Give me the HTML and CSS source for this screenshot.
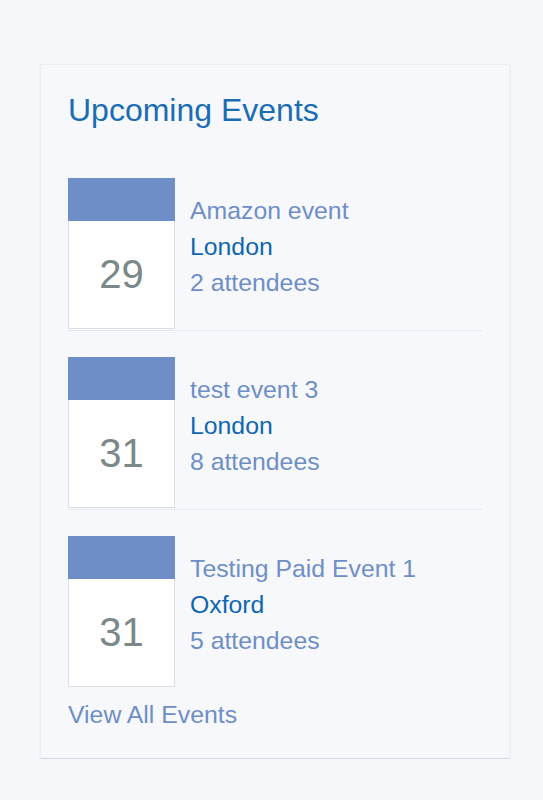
FILE: index.html
```html
<!DOCTYPE html>
<html lang="en">
<head>
<meta charset="utf-8">
<title>Upcoming Events</title>
<link rel="stylesheet" href="styles.css">
</head>
<body>
	<div class="panel">
		<h2 class="panelTitle">Upcoming Events</h2>
		<ul class="eventList">
			<li class="eventItem">
				<div class="cal"><div class="calTop"></div><div class="calDay">29</div></div>
				<div class="eventInfo">
					<a class="eventName" href="#">Amazon event</a>
					<span class="eventCity">London</span>
					<span class="eventCount">2 attendees</span>
				</div>
			</li>
			<li class="eventItem">
				<div class="cal"><div class="calTop"></div><div class="calDay">31</div></div>
				<div class="eventInfo">
					<a class="eventName" href="#">test event 3</a>
					<span class="eventCity">London</span>
					<span class="eventCount">8 attendees</span>
				</div>
			</li>
			<li class="eventItem">
				<div class="cal"><div class="calTop"></div><div class="calDay">31</div></div>
				<div class="eventInfo">
					<a class="eventName" href="#">Testing Paid Event 1</a>
					<span class="eventCity">Oxford</span>
					<span class="eventCount">5 attendees</span>
				</div>
			</li>
		</ul>
		<a class="viewAll" href="#">View All Events</a>
	</div>
</body>
</html>
```
FILE: styles.css
```css
body{
	margin:0;
	background:#f5f7fa;
	font-family:"Liberation Sans",Arial,sans-serif;
}
.panel{
	box-sizing:border-box;
	width:470px;
	margin:64px 0 0 40px;
	padding:25px 27px 25px 27px;
	background:#f7f8fb;
	border:1px solid #eceef2;
	border-bottom:1px solid #d3d6da;
	box-shadow:0 1px 2px rgba(0,0,0,0.08);
}
.panelTitle{
	margin:0 0 48px 0;
	font-size:32px;
	line-height:40px;
	font-weight:normal;
	color:#1a6db5;
}
.eventList{
	list-style:none;
	margin:0;
	padding:0;
}
.eventItem{
	display:flex;
	gap:15px;
	padding-bottom:1px;
	margin-bottom:26px;
	border-bottom:1px solid #e6e9ed;
}
.eventItem:last-child{
	border-bottom:none;
	padding-bottom:0;
	margin-bottom:10px;
}
.cal{
	width:107px;
	flex:none;
}
.calTop{
	height:43px;
	background:#6d8ec6;
}
.calDay{
	box-sizing:border-box;
	height:108px;
	background:#fff;
	border:1px solid #dcdfe2;
	border-top:none;
	display:flex;
	align-items:center;
	justify-content:center;
	font-size:40px;
	color:#7a8889;
}
.eventInfo{
	display:flex;
	flex-direction:column;
	padding-top:15px;
	font-size:24.8px;
	line-height:36px;
}
.eventName,.eventCount{
	color:#6e8ec7;
	text-decoration:none;
}
.eventCity{
	color:#0f66b0;
}
.viewAll{
	display:block;
	font-size:24.8px;
	line-height:36px;
	color:#6e8ec7;
	text-decoration:none;
}
```
